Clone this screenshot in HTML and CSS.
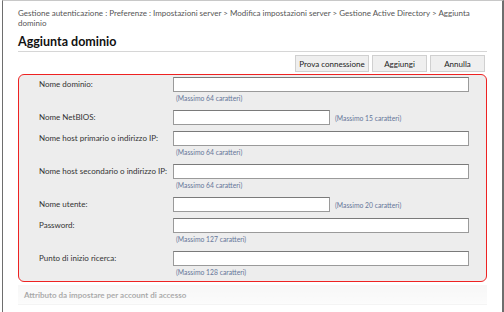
FILE: index.html
```
<!DOCTYPE html>
<html lang="it">
<head>
<meta charset="utf-8">
<link rel="stylesheet" href="styles.css">
</head>
<body>
<div class="window">
  <div class="content">
    <div class="crumbs">Gestione autenticazione : Preferenze : Impostazioni server &gt; Modifica impostazioni server &gt; Gestione Active Directory &gt; Aggiunta dominio</div>
    <h1 class="title">Aggiunta dominio</h1>
    <div class="actions">
      <button class="btn btn-wide">Prova connessione</button>
      <button class="btn">Aggiungi</button>
      <button class="btn">Annulla</button>
    </div>
    <div class="panel">
      <div class="row">
        <span class="label">Nome dominio:</span>
        <div class="field"><span class="input long"></span><span class="hint">(Massimo 64 caratteri)</span></div>
      </div>
      <div class="row">
        <span class="label">Nome NetBIOS:</span>
        <div class="field inline"><span class="input short"></span><span class="hint">(Massimo 15 caratteri)</span></div>
      </div>
      <div class="row">
        <span class="label">Nome host primario o indirizzo IP:</span>
        <div class="field"><span class="input long"></span><span class="hint">(Massimo 64 caratteri)</span></div>
      </div>
      <div class="row">
        <span class="label">Nome host secondario o indirizzo IP:</span>
        <div class="field"><span class="input long"></span><span class="hint">(Massimo 64 caratteri)</span></div>
      </div>
      <div class="row">
        <span class="label">Nome utente:</span>
        <div class="field inline"><span class="input short"></span><span class="hint">(Massimo 20 caratteri)</span></div>
      </div>
      <div class="row">
        <span class="label">Password:</span>
        <div class="field"><span class="input long"></span><span class="hint">(Massimo 127 caratteri)</span></div>
      </div>
      <div class="row">
        <span class="label">Punto di inizio ricerca:</span>
        <div class="field"><span class="input long"></span><span class="hint">(Massimo 128 caratteri)</span></div>
      </div>
    </div>
    <div class="section">Attributo da impostare per account di accesso</div>
  </div>
  <div class="fade"></div>
</div>
</body>
</html>
```
FILE: styles.css
```
html, body {
  margin: 0;
  padding: 0;
  background: #fff;
}
.window {
  position: relative;
  width: 499px;
  height: 311px;
  margin-left: 2px;
  border-top: 1px solid #c8c8c8;
  border-left: 1px solid #6e6e6e;
  border-right: 2px solid #6e6e6e;
  overflow: hidden;
  font-family: Lato, "Noto Sans", sans-serif;
  color: #333;
}
.content {
  padding: 7px 15px 0 15px;
}
.crumbs {
  font-size: 8px;
  line-height: 10px;
  color: #555;
  width: 462px;
}
.title {
  margin: 6px 0 0 0;
  font-size: 12.5px;
  font-weight: 700;
  line-height: 15px;
  color: #111;
  padding-bottom: 2px;
  border-bottom: 1px solid #d6d6d6;
}
.actions {
  display: flex;
  justify-content: flex-end;
  gap: 3px;
  margin-top: 3px;
  padding-right: 2px;
}
.btn {
  font-family: inherit;
  font-size: 8px;
  color: #222;
  background: #efefef;
  border: 1px solid #d0d0d0;
  height: 17px;
  width: 55px;
  padding: 0;
  margin: 0;
  white-space: nowrap;
}
.btn-wide {
  width: 74px;
}
.panel {
  margin-top: 2px;
  border: 1.5px solid #ee2222;
  border-radius: 6px;
  background: #ededed;
  padding: 2px 0 3px 20px;
  display: flex;
  flex-direction: column;
  gap: 6px;
}
.row {
  display: flex;
  align-items: flex-start;
}
.label {
  width: 134px;
  font-size: 8px;
  line-height: 15px;
  color: #333;
  white-space: nowrap;
}
.field {
  display: flex;
  flex-direction: column;
}
.field.inline {
  flex-direction: row;
  align-items: center;
  gap: 5px;
}
.input {
  display: block;
  height: 13px;
  background: #fff;
  border: 1px solid #9a9a9a;
  border-top-color: #7a7a7a;
}
.input.long { width: 294px; }
.input.short { width: 155px; }
.hint {
  font-size: 6.8px;
  line-height: 12px;
  color: #67779a;
  padding-left: 3px;
  white-space: nowrap;
}
.field.inline .hint {
  padding-left: 0;
}
.section {
  margin-top: 3px;
  font-size: 8px;
  font-weight: 700;
  color: #8a8a8a;
  padding: 5px 6px 4px 6px;
  border-bottom: 1px solid #e2e2e2;
  background: #f7f7f7;
}
.fade {
  position: absolute;
  left: -2px;
  right: -3px;
  bottom: 0;
  height: 28px;
  background: linear-gradient(to bottom, rgba(255,255,255,0) 0%, rgba(255,255,255,0.3) 45%, rgba(255,255,255,0.95) 100%);
}
```
